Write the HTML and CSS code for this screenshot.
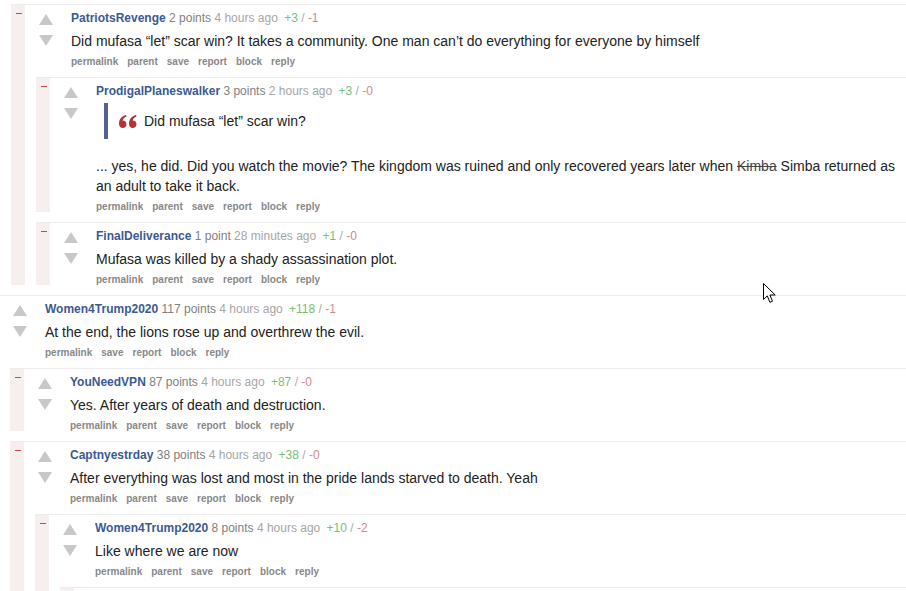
FILE: index.html
```html
<!DOCTYPE html>
<html>
<head>
	<meta charset="UTF-8">
	<title>Comments</title>
	<link rel="stylesheet" href="styles.css">
</head>
<body>
	<div class="page">
		<div class="children lead">
			<div class="comment">
				<div class="bar"><span class="toggle"></span></div>
				<div class="main">
					<div class="entry">
						<div class="vote"><span class="up"></span><span class="down"></span></div>
						<div class="content">
							<div class="tagline"><a class="author">PatriotsRevenge</a> <span class="score">2 points</span> <span class="time">4 hours ago</span> <span class="ups">+3</span> <span class="sep">/</span> <span class="downs">-1</span></div>
							<p class="body">Did mufasa “let” scar win? It takes a community. One man can’t do everything for everyone by himself</p>
							<ul class="buttons"><li>permalink</li><li>parent</li><li>save</li><li>report</li><li>block</li><li>reply</li></ul>
						</div>
					</div>
					<div class="children">
						<div class="comment">
							<div class="bar"><span class="toggle"></span></div>
							<div class="main">
								<div class="entry">
									<div class="vote"><span class="up"></span><span class="down"></span></div>
									<div class="content">
										<div class="tagline"><a class="author">ProdigalPlaneswalker</a> <span class="score">3 points</span> <span class="time">2 hours ago</span> <span class="ups">+3</span> <span class="sep">/</span> <span class="downs">-0</span></div>
										<blockquote class="quote">
											<svg class="quote-icon" width="18" height="13" viewBox="0 0 18 13">
												<path d="M0 9C0 4.2 2.6 1.2 7 0l.6 1.5C5.2 2.5 3.9 3.9 3.6 5.6c2.2 0 3.9 1.6 3.9 3.7S5.8 13 3.7 13C1.5 13 0 11.3 0 9z"/>
												<path d="M10 9c0-4.8 2.6-7.8 7-9l.6 1.5c-2.4 1-3.7 2.4-4 4.1 2.2 0 3.9 1.6 3.9 3.7S15.8 13 13.7 13C11.5 13 10 11.3 10 9z"/>
											</svg>
											<span>Did mufasa “let” scar win?</span>
										</blockquote>
										<p class="body gap">... yes, he did. Did you watch the movie? The kingdom was ruined and only recovered years later when <s>Kimba</s> Simba returned as an adult to take it back.</p>
										<ul class="buttons"><li>permalink</li><li>parent</li><li>save</li><li>report</li><li>block</li><li>reply</li></ul>
									</div>
								</div>
							</div>
						</div>
						<div class="comment">
							<div class="bar"><span class="toggle"></span></div>
							<div class="main">
								<div class="entry">
									<div class="vote"><span class="up"></span><span class="down"></span></div>
									<div class="content">
										<div class="tagline"><a class="author">FinalDeliverance</a> <span class="score">1 point</span> <span class="time">28 minutes ago</span> <span class="ups">+1</span> <span class="sep">/</span> <span class="downs">-0</span></div>
										<p class="body">Mufasa was killed by a shady assassination plot.</p>
										<ul class="buttons"><li>permalink</li><li>parent</li><li>save</li><li>report</li><li>block</li><li>reply</li></ul>
									</div>
								</div>
							</div>
						</div>
					</div>
				</div>
			</div>
		</div>

		<div class="comment root">
			<div class="main">
				<div class="entry">
					<div class="vote"><span class="up"></span><span class="down"></span></div>
					<div class="content">
						<div class="tagline"><a class="author">Women4Trump2020</a> <span class="score">117 points</span> <span class="time">4 hours ago</span> <span class="ups">+118</span> <span class="sep">/</span> <span class="downs">-1</span></div>
						<p class="body">At the end, the lions rose up and overthrew the evil.</p>
						<ul class="buttons"><li>permalink</li><li>save</li><li>report</li><li>block</li><li>reply</li></ul>
					</div>
				</div>
				<div class="children">
					<div class="comment">
						<div class="bar"><span class="toggle"></span></div>
						<div class="main">
							<div class="entry">
								<div class="vote"><span class="up"></span><span class="down"></span></div>
								<div class="content">
									<div class="tagline"><a class="author">YouNeedVPN</a> <span class="score">87 points</span> <span class="time">4 hours ago</span> <span class="ups">+87</span> <span class="sep">/</span> <span class="downs">-0</span></div>
									<p class="body">Yes. After years of death and destruction.</p>
									<ul class="buttons"><li>permalink</li><li>parent</li><li>save</li><li>report</li><li>block</li><li>reply</li></ul>
								</div>
							</div>
						</div>
					</div>
					<div class="comment">
						<div class="bar"><span class="toggle"></span></div>
						<div class="main">
							<div class="entry">
								<div class="vote"><span class="up"></span><span class="down"></span></div>
								<div class="content">
									<div class="tagline"><a class="author">Captnyestrday</a> <span class="score">38 points</span> <span class="time">4 hours ago</span> <span class="ups">+38</span> <span class="sep">/</span> <span class="downs">-0</span></div>
									<p class="body">After everything was lost and most in the pride lands starved to death. Yeah</p>
									<ul class="buttons"><li>permalink</li><li>parent</li><li>save</li><li>report</li><li>block</li><li>reply</li></ul>
								</div>
							</div>
							<div class="children">
								<div class="comment">
									<div class="bar"><span class="toggle"></span></div>
									<div class="main">
										<div class="entry">
											<div class="vote"><span class="up"></span><span class="down"></span></div>
											<div class="content">
												<div class="tagline"><a class="author">Women4Trump2020</a> <span class="score">8 points</span> <span class="time">4 hours ago</span> <span class="ups">+10</span> <span class="sep">/</span> <span class="downs">-2</span></div>
												<p class="body">Like where we are now</p>
												<ul class="buttons"><li>permalink</li><li>parent</li><li>save</li><li>report</li><li>block</li><li>reply</li></ul>
											</div>
										</div>
										<div class="children">
											<div class="comment">
												<div class="bar"><span class="toggle"></span></div>
												<div class="main">
													<div class="entry">
														<div class="vote"><span class="up"></span><span class="down"></span></div>
														<div class="content empty"></div>
													</div>
												</div>
											</div>
										</div>
									</div>
								</div>
							</div>
						</div>
					</div>
				</div>
			</div>
		</div>
	</div>

	<svg class="cursor" width="14" height="21" viewBox="0 0 14 21">
		<path d="M0.5 0.5v16l3.8-3.6 2.6 6.4 2.6-1.1-2.6-6.2h5.3z" fill="#fff" stroke="#000" stroke-width="1"/>
	</svg>
</body>
</html>
```

FILE: styles.css
```css
body {
	margin: 0;
	background: #fff;
	font-family: "Liberation Sans", Arial, sans-serif;
	color: #222;
	overflow: hidden;
}
.page {
	position: relative;
}
.lead {
	margin-left: 10px;
}
.children {
	margin-left: 11px;
}
.comment {
	display: flex;
	margin-top: 10px;
	border-top: 1px solid #ececec;
}
.lead > .comment:first-child {
	margin-top: 4px;
}
.comment.root {
	margin-left: -1px;
}
.bar {
	flex: none;
	width: 14px;
	background: #f7eeee;
}
.toggle {
	display: block;
	width: 6px;
	height: 1px;
	margin: 8px 0 0 5px;
	background: #c4474a;
}
.main {
	flex: 1;
	min-width: 0;
}
.entry {
	display: flex;
}
.vote {
	flex: none;
	width: 14px;
	margin-left: 14px;
	padding-top: 9px;
}
.up, .down {
	display: block;
	width: 0;
	height: 0;
	border-left: 7px solid transparent;
	border-right: 7px solid transparent;
}
.up {
	border-bottom: 11px solid #c8c8c8;
}
.down {
	margin-top: 10px;
	border-top: 11px solid #c8c8c8;
}
.content {
	flex: 1;
	min-width: 0;
	margin-left: 18px;
	padding-top: 5px;
}
.content.empty {
	height: 60px;
}
.tagline {
	font-size: 12px;
	line-height: 16px;
	white-space: nowrap;
}
.author {
	color: #3b5a92;
	font-weight: bold;
}
.score {
	color: #808080;
}
.time {
	color: #a6a6a6;
}
.ups {
	margin-left: 3px;
	color: #77bf77;
}
.sep {
	color: #aaa;
}
.downs {
	color: #cf8a8a;
}
.body {
	margin: 5px 0 0;
	font-size: 14px;
	line-height: 20px;
	color: #222;
}
.body.gap {
	margin-top: 17px;
}
.body s {
	color: #444;
}
.quote {
	display: flex;
	align-items: center;
	gap: 7px;
	margin: 4px 0 0 8px;
	padding: 8px 0 8px 11px;
	border-left: 4px solid #56618f;
	font-size: 14px;
	line-height: 20px;
}
.quote-icon {
	fill: #b23238;
}
.buttons {
	display: flex;
	gap: 9px;
	margin: 5px 0 0;
	padding: 0;
	list-style: none;
	font-size: 10px;
	font-weight: bold;
	line-height: 11px;
	color: #888;
}
.cursor {
	position: absolute;
	left: 763px;
	top: 283px;
}
```
